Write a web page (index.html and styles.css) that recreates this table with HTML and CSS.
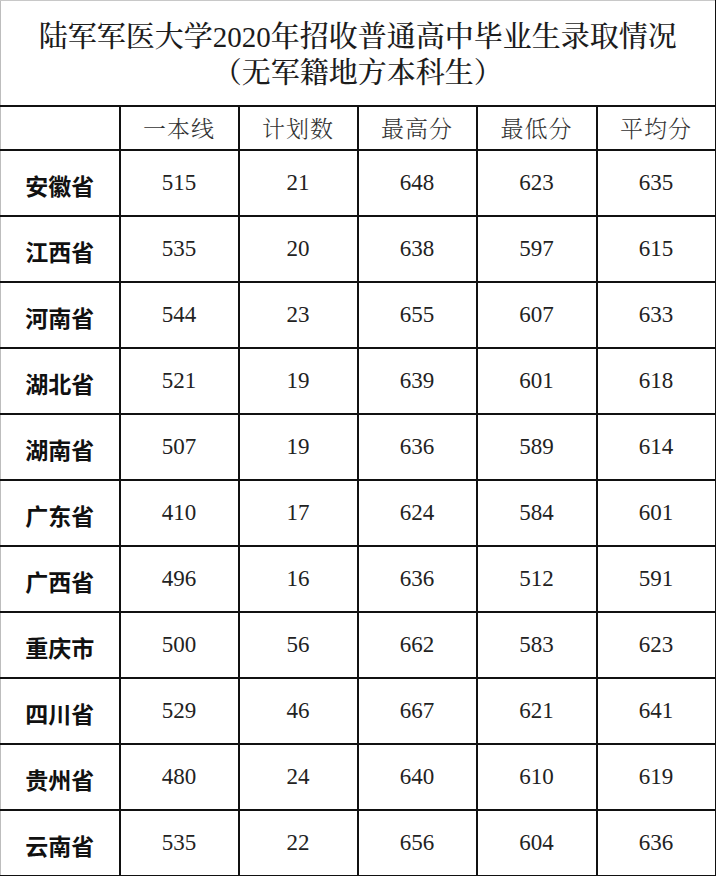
FILE: index.html
```html
<!DOCTYPE html>
<html lang="zh-CN">
<head>
<meta charset="utf-8">
<title>陆军军医大学2020年招收普通高中毕业生录取情况</title>
<link rel="stylesheet" href="styles.css">
</head>
<body>
<table class="score-table">
  <colgroup>
    <col class="c1"><col class="c2"><col class="c3"><col class="c4"><col class="c5"><col class="c6">
  </colgroup>
  <thead>
    <tr class="title-row">
      <th colspan="6" class="title">陆军军医大学2020年招收普通高中毕业生录取情况<br>（无军籍地方本科生）</th>
    </tr>
    <tr class="head-row">
      <th class="first"></th>
      <th>一本线</th>
      <th>计划数</th>
      <th>最高分</th>
      <th>最低分</th>
      <th>平均分</th>
    </tr>
  </thead>
  <tbody>
    <tr><th class="first">安徽省</th><td>515</td><td>21</td><td>648</td><td>623</td><td>635</td></tr>
    <tr><th class="first">江西省</th><td>535</td><td>20</td><td>638</td><td>597</td><td>615</td></tr>
    <tr><th class="first">河南省</th><td>544</td><td>23</td><td>655</td><td>607</td><td>633</td></tr>
    <tr><th class="first">湖北省</th><td>521</td><td>19</td><td>639</td><td>601</td><td>618</td></tr>
    <tr><th class="first">湖南省</th><td>507</td><td>19</td><td>636</td><td>589</td><td>614</td></tr>
    <tr><th class="first">广东省</th><td>410</td><td>17</td><td>624</td><td>584</td><td>601</td></tr>
    <tr><th class="first">广西省</th><td>496</td><td>16</td><td>636</td><td>512</td><td>591</td></tr>
    <tr><th class="first">重庆市</th><td>500</td><td>56</td><td>662</td><td>583</td><td>623</td></tr>
    <tr><th class="first">四川省</th><td>529</td><td>46</td><td>667</td><td>621</td><td>641</td></tr>
    <tr><th class="first">贵州省</th><td>480</td><td>24</td><td>640</td><td>610</td><td>619</td></tr>
    <tr><th class="first">云南省</th><td>535</td><td>22</td><td>656</td><td>604</td><td>636</td></tr>
  </tbody>
</table>
</body>
</html>
```

FILE: styles.css
```css
html, body {
  margin: 0;
  padding: 0;
  background: #fff;
}

body {
  width: 716px;
  height: 876px;
  overflow: hidden;
  color: #1a1a1a;
  font-family: "Liberation Serif", "Noto Serif CJK SC", "Noto Sans CJK SC", serif;
}

.score-table {
  width: 715px;
  border-collapse: collapse;
  table-layout: fixed;
}

.c1 { width: 119px; }
.c2 { width: 119px; }
.c3 { width: 119px; }
.c4 { width: 119px; }
.c5 { width: 120px; }
.c6 { width: 119px; }

.score-table th,
.score-table td {
  border: 2px solid #111;
  padding: 0;
  text-align: center;
  vertical-align: middle;
}

.score-table tr > :first-child {
  border-left: 1px solid #bdbdbd;
}

.title-row .title {
  height: 101px;
  border-top: 1px solid #c8c8c8;
  font-family: "Liberation Serif", "Noto Serif CJK SC", "Noto Sans CJK SC", serif;
  font-weight: 500;
  font-size: 29px;
  line-height: 36px;
  letter-spacing: 0;
  color: #1c1c1c;
  padding-top: 3px;
}

.head-row th {
  height: 40px;
  font-family: "Noto Serif CJK SC", "Noto Sans CJK SC", sans-serif;
  font-weight: 300;
  font-size: 23px;
  letter-spacing: 1px;
  color: #333;
  padding-bottom: 2px;
}

tbody tr {
  height: 66px;
}

tbody th.first {
  font-family: "Noto Sans CJK SC", sans-serif;
  font-weight: 700;
  font-size: 23px;
  letter-spacing: 0;
  color: #111;
  padding-top: 4px;
}

tbody td {
  font-family: "Liberation Serif", serif;
  font-size: 23px;
  color: #222;
  padding-top: 9px;
}
```
